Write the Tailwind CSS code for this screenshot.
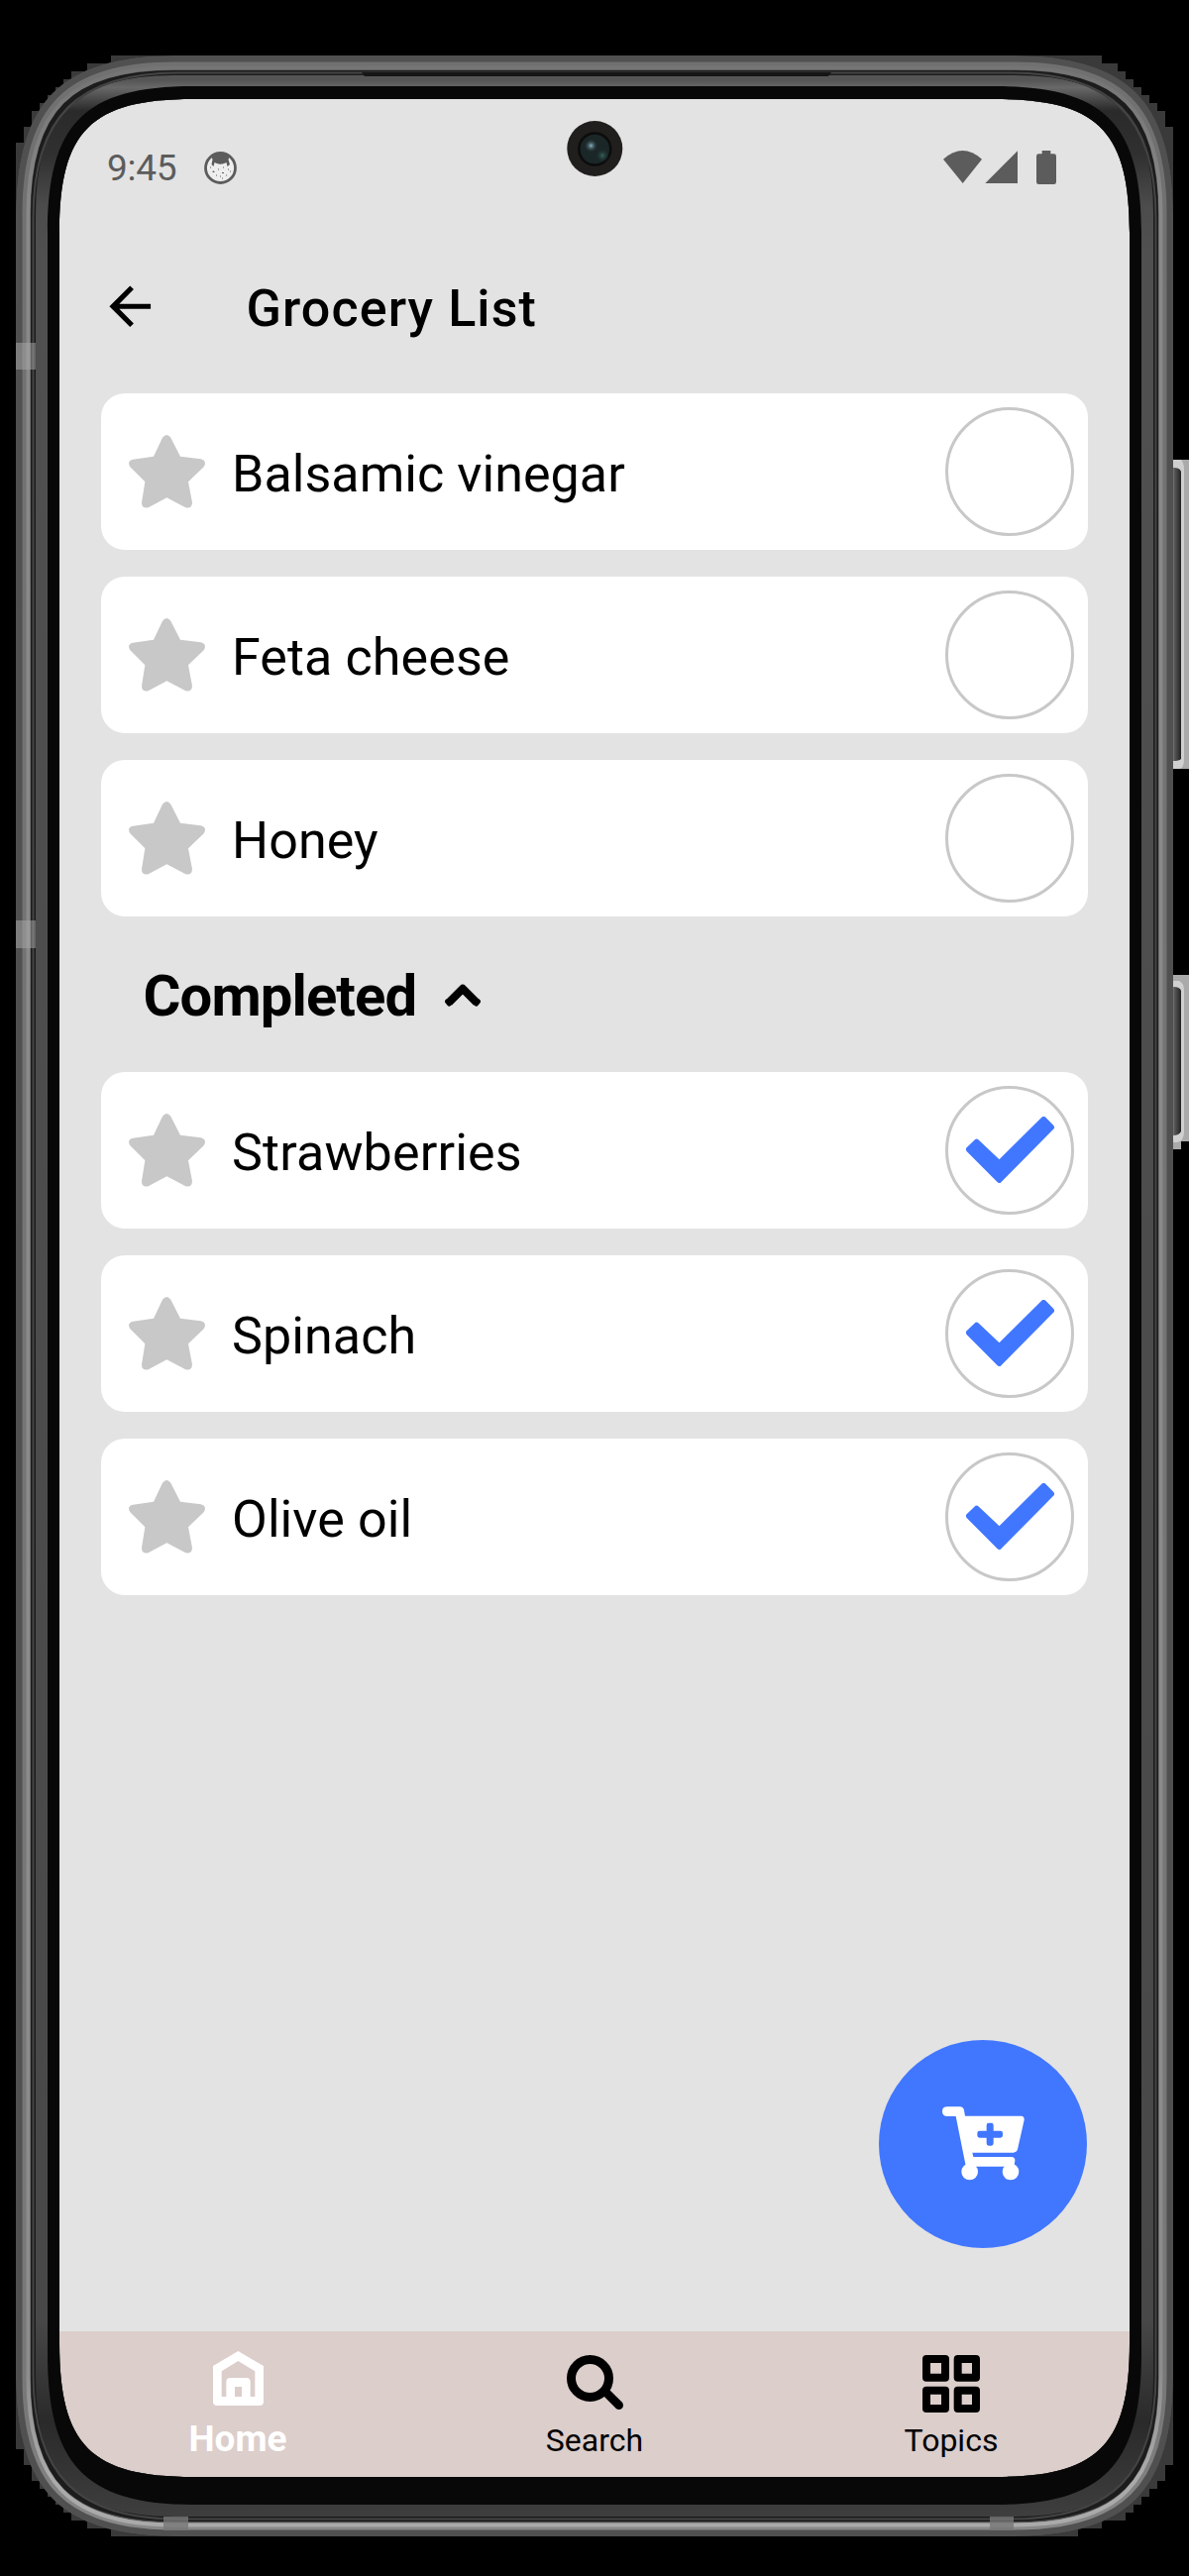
<!DOCTYPE html>
<html lang="en">
<head>
<meta charset="utf-8">
<title>Grocery List</title>
<script src="https://cdn.jsdelivr.net/npm/@tailwindcss/browser@4"></script>
</head>
<body class="bg-black font-[Roboto,sans-serif] text-black">
<svg class="hidden">
  <symbol id="star" viewBox="90 490 231 222">
    <path d="M192 498Q205 482 217 498L246 555L308 563Q328 568 317 587L270 632L282 695Q281 714 262 710L205 680L149 710Q129 714 129 695L139 632L94 587Q83 568 103 564L165 555Z" fill="#c8c8c8"/>
  </symbol>
  <symbol id="check" viewBox="135 501 268 202">
    <path d="M167 577.5L143.5 600.5L235.5 693.5L393.5 533.5L370 509.5L235.5 642.5Z" fill="#4176ff" stroke="#4176ff" stroke-width="17" stroke-linejoin="round"/>
  </symbol>
</svg>
<div class="relative h-[2600px] w-[1200px] overflow-hidden">
  <!-- screen -->
  <div class="absolute left-[60px] top-[100px] flex h-[2400px] w-[1080px] flex-col bg-[#e3e3e3]">
    <div class="flex h-[138px] items-center pl-12 pr-[74px] text-[#5c5c5c]">
      <span class="w-[98px] pt-px text-[37px] leading-none tracking-[-0.3px]">9:45</span>
      <svg class="h-[33px] w-[33px]" viewBox="0 0 33 33"><circle cx="16.5" cy="16.5" r="15" fill="#eee" stroke="#5c5c5c" stroke-width="2.8"/><path d="M7 4Q16.500 -1 26 4L24.500 8L26 13L23.500 15L22.500 11Q16.500 14.500 10.500 11L9.500 15L7.500 13L8.500 8Z" fill="#5c5c5c"/><path d="M9 20h1M14 18h1M19 16h1M24 18h1M18 21.500h2M12 24h1M16 25h1M22 24h1M6 16h1M8.500 20.500h2M26 20h1M18 27h1" stroke="#5c5c5c" stroke-width="1.200"/></svg>
      <svg class="ml-auto h-[34px] w-[114px]" viewBox="456 363 342 102" fill="#5c5c5c"><path d="M456 389Q515 337 573 389L515 462Z"/><path d="M681 364V462H583Z"/><path d="M755 363h26v10h10q7 0 7 7v78q0 7-7 7h-46q-7 0-7-7v-78q0-7 7-7h10z"/></svg>
    </div>
    <div class="flex h-[159px] items-center pl-10 pb-[17px]">
      <svg class="h-[62.500px] w-[62.500px]" viewBox="0 0 24 24"><path d="M20 11H7.830l5.590-5.590L12 4l-8 8 8 8 1.410-1.410L7.830 13H20z"/></svg>
      <h1 class="ml-[86px] mt-[6px] text-[52px] font-medium leading-none tracking-[1.100px]">Grocery List</h1>
    </div>
    <div class="flex flex-col gap-[27px] px-[42px]">
      <div class="flex h-[158px] items-center rounded-3xl bg-white pl-7 pr-[14px]"><svg class="h-[74px] w-[77px]"><use href="#star"/></svg><span class="ml-[27px] mt-[5px] text-[52px] leading-none tracking-[0.050px]">Balsamic vinegar</span><span class="ml-auto h-[130px] w-[130px] rounded-full border-3 border-[#c8c8c8]"></span></div>
      <div class="flex h-[158px] items-center rounded-3xl bg-white pl-7 pr-[14px]"><svg class="h-[74px] w-[77px]"><use href="#star"/></svg><span class="ml-[27px] mt-[5px] text-[52px] leading-none tracking-[0.100px]">Feta cheese</span><span class="ml-auto h-[130px] w-[130px] rounded-full border-3 border-[#c8c8c8]"></span></div>
      <div class="flex h-[158px] items-center rounded-3xl bg-white pl-7 pr-[14px]"><svg class="h-[74px] w-[77px]"><use href="#star"/></svg><span class="ml-[27px] mt-[5px] text-[52px] leading-none tracking-[0.100px]">Honey</span><span class="ml-auto h-[130px] w-[130px] rounded-full border-3 border-[#c8c8c8]"></span></div>
    </div>
    <div class="flex h-[157px] items-center pl-[84.500px]">
      <h2 class="mt-[3px] w-[304.500px] text-[58px] font-bold leading-none tracking-[-0.900px]">Completed</h2>
      <svg class="h-[24px] w-[36px]" viewBox="1047 95 108 71"><path d="M1059 154L1101 112L1143 154" fill="none" stroke="#000" stroke-width="24" stroke-linejoin="round"/><path d="M1054 151L1060 158M1142 158L1148 151" stroke="#000" stroke-width="14" stroke-linecap="round"/></svg>
    </div>
    <div class="flex flex-col gap-[27px] px-[42px]">
      <div class="flex h-[158px] items-center rounded-3xl bg-white pl-7 pr-[14px]"><svg class="h-[74px] w-[77px]"><use href="#star"/></svg><span class="ml-[27px] mt-[5px] text-[52px] leading-none tracking-[0.150px]">Strawberries</span><span class="ml-auto flex h-[130px] w-[130px] items-center justify-center rounded-full border-3 border-[#c8c8c8] pl-px"><svg class="h-[67.300px] w-[89.300px]"><use href="#check"/></svg></span></div>
      <div class="flex h-[158px] items-center rounded-3xl bg-white pl-7 pr-[14px]"><svg class="h-[74px] w-[77px]"><use href="#star"/></svg><span class="ml-[27px] mt-[5px] text-[52px] leading-none tracking-[0.100px]">Spinach</span><span class="ml-auto flex h-[130px] w-[130px] items-center justify-center rounded-full border-3 border-[#c8c8c8] pl-px"><svg class="h-[67.300px] w-[89.300px]"><use href="#check"/></svg></span></div>
      <div class="flex h-[158px] items-center rounded-3xl bg-white pl-7 pr-[14px]"><svg class="h-[74px] w-[77px]"><use href="#star"/></svg><span class="ml-[27px] mt-[5px] text-[52px] leading-none tracking-[0.100px]">Olive oil</span><span class="ml-auto flex h-[130px] w-[130px] items-center justify-center rounded-full border-3 border-[#c8c8c8] pl-px"><svg class="h-[67.300px] w-[89.300px]"><use href="#check"/></svg></span></div>
    </div>
    <div class="mb-[84px] ml-auto mr-[43px] mt-auto h-[210px] w-[210px] rounded-full bg-[#4176ff]">
      <svg class="h-full w-full" viewBox="81 87 630 630">
        <g fill="#fff"><path d="M286 289H326Q337 289 339 300L342 317H512Q522 318 521 329L501 418Q498 428 488 428H364L367 441H482Q494 442 493 453L490 470H372L344 468L314 318H286Q273 317 273 303Q273 290 286 289Z"/><circle cx="356" cy="486" r="25"/><circle cx="480" cy="486" r="25"/></g>
        <path d="M414 338h7q7 0 7 7v17h21q7 0 7 7v7q0 7-7 7h-21v17q0 7-7 7h-7q-7 0-7-7v-17h-21q-7 0-7-7v-7q0-7 7-7h21v-17q0-7 7-7z" fill="#4176ff"/>
      </svg>
    </div>
    <nav class="grid h-[147px] grid-cols-3 bg-[#dbcecb]">
      <div class="flex flex-col items-center pt-5 text-white">
        <svg class="h-[55px] w-[51px]" viewBox="642 159 153 165"><path fill="#fff" fill-rule="evenodd" d="M718 159L795 204V312Q795 324 783 324H654Q642 324 642 312V204ZM718 189L668 220V297H682V252Q682 240 694 240H743Q755 240 755 252V297H769V220ZM708 267V297H729V267Z"/></svg>
        <span class="mt-[15px] text-[37px] font-bold leading-none">Home</span>
      </div>
      <div class="flex flex-col items-center pt-6">
        <svg class="h-[55px] w-[57px]" viewBox="273 141 171 165" fill="none" stroke="#000"><circle cx="343.500" cy="211.500" r="57" stroke-width="27"/><path d="M390 252L431 293" stroke-width="26" stroke-linecap="round"/></svg>
        <span class="mt-[15px] text-[32px] leading-none">Search</span>
      </div>
      <div class="flex flex-col items-center pt-6">
        <svg class="h-[58px] w-[58px]" viewBox="390 169 174 174" fill="none" stroke="#000" stroke-width="24" stroke-linejoin="round"><path d="M402 181h57v56h-57zM497 181h55v56h-55zM402 276h57v55h-57zM497 276h55v55h-55z"/></svg>
        <span class="mt-[12px] text-[32px] leading-none">Topics</span>
      </div>
    </nav>
  </div>
  <!-- device body -->
  <svg class="pointer-events-none absolute inset-0" width="1200" height="2600" viewBox="0 0 1200 2600">
    <defs>
      <linearGradient id="mid" x1="0" y1="0" x2="0" y2="2600" gradientUnits="userSpaceOnUse"><stop offset="0" stop-color="#707070"/><stop offset=".94" stop-color="#787878"/><stop offset=".98" stop-color="#888"/></linearGradient>
      <linearGradient id="shine" x1="0" y1="0" x2="0" y2="2600" gradientUnits="userSpaceOnUse"><stop offset=".03" stop-color="#757575"/><stop offset=".08" stop-color="#888"/><stop offset=".92" stop-color="#8c8c8c"/><stop offset=".96" stop-color="#aaa"/></linearGradient>
      <linearGradient id="in" x1="0" y1="0" x2="0" y2="2600" gradientUnits="userSpaceOnUse"><stop offset=".031" stop-color="#555"/><stop offset=".034" stop-color="#686868"/><stop offset=".043" stop-color="#2a2a2a"/><stop offset=".06" stop-color="#303030"/><stop offset=".08" stop-color="#4c4c4c"/><stop offset=".1" stop-color="#505050"/><stop offset=".9" stop-color="#484848"/><stop offset=".94" stop-color="#2a2a2a"/><stop offset=".98" stop-color="#404040"/></linearGradient>
      <linearGradient id="key" x1="0" x2="1"><stop offset="0" stop-color="#777"/><stop offset=".2" stop-color="#555"/><stop offset=".6" stop-color="#3c3c3c"/><stop offset="1" stop-color="#222"/></linearGradient>
      <radialGradient id="glint"><stop offset="0" stop-color="#8db4c4"/><stop offset="1" stop-color="#1b2b30" stop-opacity="0"/></radialGradient>
      <radialGradient id="glow"><stop offset="0" stop-color="#356458"/><stop offset="1" stop-color="#1b2b30" stop-opacity="0"/></radialGradient>
      <path id="rail" d="M26 216C26 109 69 66 176 66H1024C1131 66 1174 109 1174 216V2400C1174 2507 1131 2550 1024 2550H176C69 2550 26 2507 26 2400Z"/>
    </defs>
    <path fill="#3a3a3a" fill-rule="evenodd" d="M112 56H1112V64H1128V72H1136V80H1144V88H1152V96H1160V104H1168V112H1176V128H1184V2488H1176V2504H1168V2512H1160V2520H1152V2528H1144V2536H1136V2544H1112V2552H1088V2560H112V2552H88V2544H72V2536H64V2528H56V2520H48V2512H40V2504H32V2488H24V2472H16V144H24V128H32V112H40V104H48V96H56V88H64V80H72V72H88V64H112ZM60 235V2365C60 2468 92 2500 195 2500H1005C1108 2500 1140 2468 1140 2365V235C1140 132 1108 100 1005 100H195C92 100 60 132 60 235Z"/>
    <path fill="url(#in)" fill-rule="evenodd" d="M34 225C34 119 79 74 185 74H1015C1121 74 1166 119 1166 225V2392C1166 2498 1121 2543 1015 2543H185C79 2543 34 2498 34 2392ZM60 235V2365C60 2468 92 2500 195 2500H1005C1108 2500 1140 2468 1140 2365V235C1140 132 1108 100 1005 100H195C92 100 60 132 60 235Z"/>
    <path fill="#080808" fill-rule="evenodd" d="M48 235C48 126 84 87 195 87H1005C1116 87 1152 126 1152 235V2375C1152 2485 1116 2528 1005 2528H195C84 2528 48 2485 48 2375ZM60 235V2365C60 2468 92 2500 195 2500H1005C1108 2500 1140 2468 1140 2365V235C1140 132 1108 100 1005 100H195C92 100 60 132 60 235Z"/>
    <g fill="none">
      <use href="#rail" stroke="#1c1c1c" stroke-width="20"/>
      <path d="M33.500 220C33.500 118 78 73.500 180 73.500H1020C1122 73.500 1166.500 118 1166.500 220V2396C1166.500 2498 1122 2542.500 1020 2542.500H180C78 2542.500 33.500 2498 33.500 2396Z" stroke="#444" stroke-width="2"/>
      <path d="M23.500 216C23.500 107 67 63.500 176 63.500H1024C1133 63.500 1176.500 107 1176.500 216V2400C1176.500 2509 1133 2552.500 1024 2552.500H176C67 2552.500 23.500 2509 23.500 2400Z" stroke="#505050" stroke-width="15"/>
      <use href="#rail" stroke="url(#mid)" stroke-width="7"/>
      <path d="M28.500 216C28.500 111 71 68.500 176 68.500H1024C1129 68.500 1171.500 111 1171.500 216V2400C1171.500 2506 1129 2548.500 1024 2548.500H176C71 2548.500 28.500 2506 28.500 2400Z" stroke="url(#shine)" stroke-width="4"/>
    </g>
    <path d="M365 73H839L836 77H368Z" fill="#151515"/>
    <g fill="#aaa" fill-opacity=".5"><path d="M16 346h20v27H16zM16 929h20v28H16z"/></g>
    <path d="M165 2540h25v14h-25zM999 2540h24v14h-24z" fill="#777" fill-opacity=".8"/>
    <!-- side keys -->
    <path d="M1184 464h16v312h-16zM1184 984h16v168h-8v8h-8z" fill="#aaa"/>
    <path d="M1184 464h8q3 3 3 10v292q0 8-4 10h-7zM1184 990h6q5 2 5 10v142q0 10-7 11h-4z" fill="#d0d0d0"/>
    <path d="M1184 472q7 0 8 4v290q-2 2-8 2zM1184 996q7 0 8 4v142q-2 4-8 4z" fill="url(#key)"/>
    <!-- camera -->
    <circle cx="600.300" cy="150" r="28" fill="#211f1d"/><circle cx="600.300" cy="150.500" r="16" fill="#1b2627" stroke="#0c0c0c" stroke-width="2.500"/><circle cx="596.500" cy="147" r="7" fill="url(#glint)"/><circle cx="608" cy="157" r="7" fill="url(#glow)"/>
  </svg>
</div>
</body>
</html>
